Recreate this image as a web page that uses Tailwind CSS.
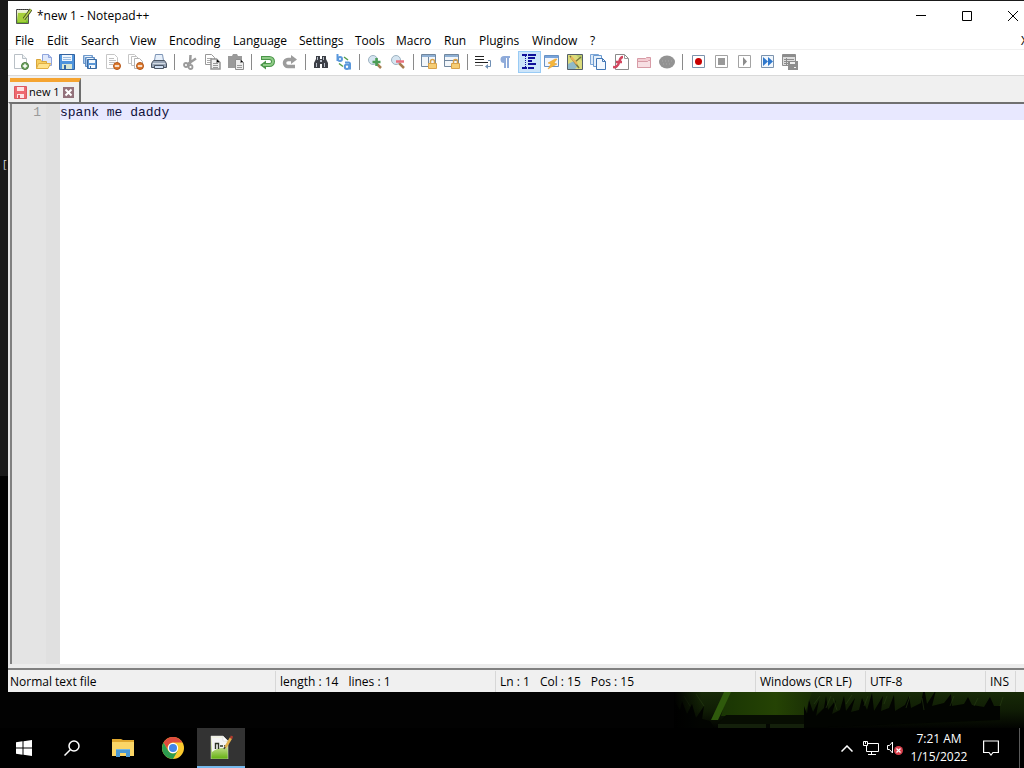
<!DOCTYPE html>
<html lang="en">
<head>
    <meta charset="UTF-8">
    <meta name="viewport" content="width=device-width, initial-scale=1.0">
    <title>*new 1 - Notepad++</title>
    <script src="https://cdn.jsdelivr.net/npm/@tailwindcss/browser@4"></script>
</head>
<body class="relative flex flex-col h-screen overflow-hidden bg-black text-black text-[12px] leading-4 font-['Open_Sans','Noto_Sans',sans-serif]">
    <!-- Wallpaper -->
    <div class="absolute inset-x-0 top-0 bottom-10 -z-0 bg-[linear-gradient(#1a1a1a_476px,#020202_476px)]">
        <span class="absolute left-[3px] top-[156px] text-[11px] text-gray-300">[</span>
        <svg class="absolute right-0 bottom-0 w-[350px] h-9" viewBox="0 0 350 36">
            <defs>
                <linearGradient id="grass" x1="0" x2="0" y1="0" y2="1"><stop offset="0" stop-color="#172a07"/><stop offset=".5" stop-color="#101d05"/><stop offset="1" stop-color="#020301"/></linearGradient>
                <linearGradient id="leaf" x1="0" x2="1" y1="0" y2="0"><stop offset="0" stop-color="#1a3504"/><stop offset=".6" stop-color="#254304"/><stop offset="1" stop-color="#1a2f05"/></linearGradient>
                <linearGradient id="fade" x1="0" x2="1"><stop offset="0" stop-color="#000"/><stop offset=".08" stop-color="#000" stop-opacity="0"/></linearGradient>
            </defs>
            <path fill="url(#grass)" d="M0 0h350v36H0z"/>
            <path fill="url(#leaf)" d="M54 0h84l-8 24H47z"/>
            <path fill="#070d02" d="M52 23h78l4 9H44z"/>
            <path fill="#14200b" d="M44 32h88v4H44z"/>
            <path fill="#040702" d="M92 32h4v4h-4z"/>
            <path fill="#2f5a0c" d="M50 0h7L44 28h-7z"/>
            <path fill="#020401" d="M0 36V8l6 10 2-9 5 13 5-10 4 14 8-12-2 13 8 2 4 7z"/>
            <path fill="#020401" d="M130 36V14l3 8 2-14 4 12 6-12-3 16 8-8 2-12 2 14 8-10-4 14 8-4 4-14 2 15 9-13-4 14 8-2 3-12 5 12 5-17 2 18 9-15-2 15 8-3 5-13 1 16 10-6 4-9 2 12 10-5 3-16 3 17 9-14-4 16 12-3 7-9 1 12 12-2 4-7 4 8 12 2 6-10 4 9h6v14z"/>
            <path stroke="#2b4416" stroke-opacity=".5" fill="none" d="M10 4l6 10M22 2l8 12M140 12l6-8M152 16l5-12M163 18l-4-12M172 12l6-9M190 14l4-10M210 12l3-8M232 16l4-12M250 18l-2-12M276 14l4-10M300 14l4-8M326 14l3-9"/>
            <path fill="url(#fade)" d="M0 0h350v36H0z"/>
        </svg>
    </div>

    <!-- Editor window, runs off the right edge of the screen -->
    <main class="relative flex flex-1 flex-col mt-px ml-2 -mr-3 mb-9 min-h-0 bg-white">
        <header class="flex items-center h-[30px] pl-2 shrink-0">
            <svg class="size-4 mr-[5px]" viewBox="0 0 16 16">
                <defs><linearGradient id="npp" x1="0" x2="0" y1="0" y2="1"><stop offset="0" stop-color="#f6f6ee"/><stop offset=".35" stop-color="#dbe9ac"/><stop offset="1" stop-color="#62b00e"/></linearGradient></defs>
                <path fill="url(#npp)" stroke="#555" d="M.5 1.500h12v14H.5z"/>
                <path stroke="#333" stroke-dasharray="1 1" d="M1 1.500h12"/>
                <path fill="#a5cf3a" d="M2 5h8v9H2z"/>
                <path stroke="#3b4a1e" stroke-width="3" d="M15 1.500L8 11"/>
                <path stroke="#b5cf4b" stroke-width="1.500" d="M15 1.500L8 11"/>
            </svg>
            <h1 class="flex-1">*new 1 - Notepad++</h1>
            <button aria-label="Minimize" class="w-[46px] h-full flex items-center justify-center"><svg class="size-[10px]" viewBox="0 0 10 10"><path stroke="#000" d="M0 4.500h10"/></svg></button>
            <button aria-label="Maximize" class="w-[46px] h-full flex items-center justify-center"><svg class="size-[10px]" viewBox="0 0 10 10"><path fill="none" stroke="#000" d="M.5.5h9v9h-9z"/></svg></button>
            <button aria-label="Close" class="w-[46px] h-full flex items-center justify-center"><svg class="size-[10px]" viewBox="0 0 10 10"><path stroke="#000" d="M0 0l10 10M10 0L0 10"/></svg></button>
        </header>

        <nav class="grid grid-cols-[32px_34px_49px_39px_64px_66px_56px_41px_48px_35px_53px_58px_1fr_15px] items-end h-[19px] pl-[7px] shrink-0 border-b border-[#f0f0f0] *:text-left">
            <button>File</button>
            <button>Edit</button>
            <button>Search</button>
            <button>View</button>
            <button>Encoding</button>
            <button>Language</button>
            <button>Settings</button>
            <button>Tools</button>
            <button>Macro</button>
            <button>Run</button>
            <button>Plugins</button>
            <button>Window</button>
            <button class="justify-self-start">?</button>
            <button>X</button>
        </nav>

        <!-- Toolbar -->
        <div role="toolbar" class="flex items-start h-[26px] pl-[2px] pt-px shrink-0 border-b border-[#d9d9d9] [&>button]:flex [&>button]:items-center [&>button]:pl-[3px] [&>button]:w-[23px] [&>button]:h-[22px] [&_svg]:size-4 [&>hr]:w-px [&>hr]:h-4 [&>hr]:mt-[3px] [&>hr]:ml-[3px] [&>hr]:mr-1 [&>hr]:border-0 [&>hr]:bg-[#8a8a8a]">
            <button aria-label="New"><svg viewBox="0 0 16 16"><path fill="#fff" stroke="#b9c0c6" d="M1.500.5h8l4 4v10h-12z"/><path fill="#eef1f3" stroke="#b9c0c6" d="M9.500.5v4h4"/><circle cx="12" cy="12" r="3.500" fill="#6fa55f" stroke="#4a7a3e"/><path stroke="#fff" stroke-width="1.400" d="M12 9.800v4.400M9.800 12h4.400"/></svg></button>
            <button aria-label="Open"><svg viewBox="0 0 16 16"><path fill="#dfe8fb" stroke="#8fa5dc" d="M6.500.5h6l3 3v8h-9z"/><path fill="#b9c9f2" stroke="#8fa5dc" d="M12.500.5v3h3"/><path fill="#f6cf62" stroke="#d9a53a" d="M.5 14.500v-9h4l1 2h5v7z"/><path fill="#ffe28a" stroke="#e0ae43" d="M.5 14.500l2-5h12l-2.500 5z"/></svg></button>
            <button aria-label="Save"><svg viewBox="0 0 16 16"><path fill="#4f94dc" stroke="#32629f" d="M.5.5h15v15H.5z"/><path fill="#eef5fc" d="M3 1h10v6H3z"/><path stroke="#9bbce0" d="M4 3.500h8M4 5.500h8"/><path fill="#d8e6d2" d="M3 10h10v5H3z"/><path fill="#33669f" d="M5 11h2v4H5z"/></svg></button>
            <button aria-label="Save all"><svg viewBox="0 0 16 16"><path fill="#a9c9ec" stroke="#6f99cb" d="M1.500 1.500h9v8h-9z"/><path fill="#eaf3fb" d="M3 2h6v2H3z"/><path fill="#9cc1ea" stroke="#5d8bc2" d="M3.500 3.500h9v9h-9z"/><path fill="#eaf3fb" d="M5 4h6v2H5z"/><path fill="#5b97d6" stroke="#3b699f" d="M5.500 5.500h9v9h-9z"/><path fill="#f2f8fd" d="M7 6h6v3H7zM7 11h6v3H7z"/><path fill="#33669f" d="M8 12h1v2H8z"/></svg></button>
            <button aria-label="Close file"><svg viewBox="0 0 16 16"><path fill="#fff" stroke="#c6c6c6" d="M1.500.5h8l3 3v11h-11z"/><path stroke="#c0c0c0" d="M4 4.500h5M4 6.500h7M4 8.500h6M4 10.500h4"/><circle cx="12" cy="12" r="3.500" fill="#dd7a2c" stroke="#b35518"/><path stroke="#fff" stroke-width="1.500" d="M9.800 12h4.400"/></svg></button>
            <button aria-label="Close all"><svg viewBox="0 0 16 16"><path fill="#fff" stroke="#c6c6c6" d="M.5.5h6l2 2v7h-8z"/><path fill="#fff" stroke="#c0c0c0" d="M3.500 2.500h5l2 2v7h-7z"/><path fill="#fff" stroke="#b4b4b4" d="M6.500 4.500h5l3 3v7h-8z"/><circle cx="12" cy="12" r="3.500" fill="#dd7a2c" stroke="#b35518"/><path stroke="#fff" stroke-width="1.500" d="M9.800 12h4.400"/></svg></button>
            <button aria-label="Print"><svg viewBox="0 0 16 16"><path fill="#e6effa" stroke="#7d94b5" d="M4.500.5h7l1 6h-9z"/><path fill="#9aa7b8" stroke="#4b5563" d="M2.500 6.500h11l2 3v4H.5v-4z"/><path stroke="#d5dce5" d="M2 9.500h12"/><path fill="#cfdff3" stroke="#4b5563" d="M3.500 11.500h9v3h-9z"/></svg></button>
            <hr>
            <button aria-label="Cut"><svg viewBox="0 0 16 16" fill="none" stroke="#9b9b9b"><path stroke-width="2.500" d="M8.500 1L8 10M14 4.500L5 10.500"/><circle cx="4" cy="11" r="2" stroke-width="1.800"/><circle cx="8.500" cy="13" r="2" stroke-width="1.800"/></svg></button>
            <button aria-label="Copy"><svg viewBox="0 0 16 16"><path fill="#fff" stroke="#999" d="M.5.5h6l3 3v7h-9z"/><path stroke="#aaa" d="M2 4.500h5M2 6.500h5M2 8.500h5"/><path fill="#f1f1f1" stroke="#949494" stroke-width="1.500" d="M6 5h5.500l3.500 3.500v6.500H6z"/><path stroke="#999" d="M8 9.500h5M8 11.500h5M8 13.500h5M11.500 5v3.500H15"/></svg></button>
            <button aria-label="Paste"><svg viewBox="0 0 16 16"><path fill="#9a9a9a" d="M0 2h4l1-2h4l1 2h4v12H0z"/><path fill="#ededed" stroke="#8e8e8e" d="M7.500 5.500h5l3 3v7h-8z"/><path stroke="#9a9a9a" d="M12.500 5.500v3h3M9 11.500h5M9 13.500h5"/></svg></button>
            <hr>
            <button aria-label="Undo"><svg viewBox="0 0 16 16" fill="none"><path stroke="#4b964a" stroke-width="4" d="M2 4h8.500a3.500 3.500 0 010 7H6"/><path fill="#4b964a" d="M7 6.500v9L1 11z"/><path stroke="#8fcb87" stroke-width="2" d="M3 4h7.500a3.500 3.500 0 010 7H4"/></svg></button>
            <button aria-label="Redo"><svg viewBox="0 0 16 16" fill="none"><path stroke="#9c9c9c" stroke-width="3.500" d="M13 12.500H6a3.500 3.500 0 010-7h4"/><path fill="#9c9c9c" d="M9 1v9l6-4.500z"/></svg></button>
            <hr>
            <button aria-label="Find"><svg viewBox="0 0 16 16"><path fill="#3c3f46" d="M3 2h4v3h2V2h4v3l2 4v5H9v-4H7v4H1V9l2-4z"/><path fill="#b8bec9" d="M4 3h1v3H4zM10 3h1v3h-1zM3 9h1v4H3zM11 9h1v4h-1zM7 6h2v2H7z"/></svg></button>
            <button aria-label="Replace"><svg viewBox="0 0 16 16" fill="none" stroke="#5b98dc" stroke-width="2"><path d="M1.500 0v7"/><circle cx="4" cy="5" r="2"/><path d="M9 8.500h3.500q1.500 0 1.500 1.500v5.500"/><circle cx="11" cy="12.800" r="2.200"/><path stroke="#579d4a" stroke-width="1.500" d="M3 9.500l4 3M8 3l4 3"/></svg></button>
            <hr>
            <button aria-label="Zoom in"><svg viewBox="0 0 16 16"><path stroke="#a77c4f" stroke-width="2.500" d="M9 9l5 5"/><circle cx="6" cy="6" r="4.500" fill="#d6e5f1" stroke="#9db2c1"/><path stroke="#4b9d55" stroke-width="2.500" d="M9.500 4v8M5.500 8h8"/></svg></button>
            <button aria-label="Zoom out"><svg viewBox="0 0 16 16"><path stroke="#a77c4f" stroke-width="2.500" d="M9 9l5 5"/><circle cx="6" cy="6" r="4.500" fill="#d6e5f1" stroke="#9db2c1"/><path stroke="#e8717e" stroke-width="2.500" d="M6 7.500h8"/></svg></button>
            <hr>
            <button aria-label="Synchronize vertical scrolling"><svg viewBox="0 0 16 16"><path fill="#f2f6fa" stroke="#71879e" d="M.5.5h14v12H.5z"/><path fill="#8fb0d4" d="M1 1h13v2H1z"/><path stroke="#71879e" d="M7.500 3v9"/><path fill="none" stroke="#d9a24a" stroke-width="1.500" d="M9.500 9V7.500a2 2 0 014 0V9"/><path fill="#f6cd74" stroke="#d9a24a" d="M7.500 9.500h8v5h-8z"/></svg></button>
            <button aria-label="Synchronize horizontal scrolling"><svg viewBox="0 0 16 16"><path fill="#f2f6fa" stroke="#71879e" d="M.5.5h14v12H.5z"/><path fill="#8fb0d4" d="M1 1h13v2H1z"/><path stroke="#71879e" d="M1 6.500h13"/><path fill="none" stroke="#d9a24a" stroke-width="1.500" d="M9.500 9V7.500a2 2 0 014 0V9"/><path fill="#f6cd74" stroke="#d9a24a" d="M7.500 9.500h8v5h-8z"/></svg></button>
            <hr>
            <button aria-label="Word wrap"><svg viewBox="0 0 16 16" fill="none"><path stroke="#222" d="M0 2.500h9M0 5.500h9M0 8.500h13"/><path stroke="#888" d="M0 11.500h8"/><path stroke="#6f8fb4" d="M13 6.500h2.500v6H11"/><path fill="#6f8fb4" d="M13 10v5l-3-2.500z"/></svg></button>
            <button aria-label="Show all characters"><svg viewBox="0 0 16 16"><path fill="#8fabda" d="M12 2v2h-1v10H9V4H8v10H6V9a3.500 3.500 0 010-7z"/></svg></button>
            <button aria-label="Show indent guide" aria-pressed="true" class="outline -outline-offset-1 outline-[#99cbf5] bg-[#cce4f9]"><svg viewBox="0 0 16 16"><path stroke="#10109a" stroke-width="2" d="M1 1h5M7 1h8M7 4h7M7 7h4M7 10h8M1 14h5M7 14h6"/><path stroke="#10109a" stroke-dasharray="1 1" d="M4.500 2v11"/></svg></button>
            <button aria-label="User defined language"><svg viewBox="0 0 16 16"><path fill="#f3f6fb" stroke="#6791c4" d="M.5 1.500h14v11H.5z"/><path fill="#79a4da" d="M1 2h13v2H1z"/><path fill="#f5b73c" stroke="#e0992a" stroke-width=".5" d="M11 5L4 9l3 1-3 5 9-5-3-1 3-4z"/></svg></button>
            <button aria-label="Document map"><svg viewBox="0 0 16 16"><path fill="#dcdc7c" stroke="#55606b" d="M.5.5h15v15H.5z"/><path fill="#8fb9c9" d="M1 10l6-3 4 5-3 3H1z"/><path fill="#b9c96a" d="M9 1h6v6z"/><path stroke="#77773d" stroke-width="1.500" d="M3 2l9 12M8 8l6-5"/><path stroke="#e9b35a" stroke-width="2" d="M4 3l6 7"/></svg></button>
            <button aria-label="Document list"><svg viewBox="0 0 16 16"><path fill="#dbe9f8" stroke="#7ba5d6" d="M.5.5h8v10h-8z"/><path fill="#e6f0fa" stroke="#6c9bd0" d="M3.500 1.500h8v11h-8z"/><path fill="#f2f8fe" stroke="#4277b5" d="M6.500 4.500h6l3 3v8h-9z"/><path fill="none" stroke="#4277b5" d="M12.500 4.500v3h3"/></svg></button>
            <button aria-label="Function list"><svg viewBox="0 0 16 16"><path fill="#fff" stroke="#8b8b8b" d="M2.500.5h9l4 4v11h-13z"/><path fill="none" stroke="#9b9b9b" d="M11.500.5v4h4"/><path fill="none" stroke="#d2475f" stroke-width="2.500" d="M10 3Q7.500 3 6.500 7T4 12q-1 1.500-4 1M3 8h6"/></svg></button>
            <button aria-label="Folder as workspace"><svg viewBox="0 0 16 16"><path fill="#f3ccd2" stroke="#d79ba6" d="M1.500 13.500v-9h8l1-1h4v10z"/><path fill="#f7dfe3" stroke="#d79ba6" d="M1.500 13.500v-6h10l1-1h2v7z"/></svg></button>
            <button aria-label="Monitoring"><svg viewBox="0 0 16 16"><ellipse cx="8" cy="8" rx="8" ry="6.500" fill="#939393"/><path fill="none" stroke="#a8a8a8" stroke-dasharray="1 2" d="M3 7h10M4 10h8"/></svg></button>
            <hr>
            <button aria-label="Record macro"><svg viewBox="0 0 16 16"><path fill="#fff" stroke="#7c93ad" d="M2.500 1.500h12v12h-12z"/><circle cx="8.500" cy="7.500" r="3.500" fill="#c80000"/></svg></button>
            <button aria-label="Stop recording"><svg viewBox="0 0 16 16"><path fill="#fff" stroke="#a3a3a3" d="M2.500 1.500h12v12h-12z"/><path fill="#999" d="M5 4h7v7H5z"/></svg></button>
            <button aria-label="Playback"><svg viewBox="0 0 16 16"><path fill="#fff" stroke="#a3a3a3" d="M2.500 1.500h12v12h-12z"/><path fill="#8c8c8c" d="M7 3l4 4.500L7 12z"/></svg></button>
            <button aria-label="Run macro multiple times"><svg viewBox="0 0 16 16"><path fill="#f1f7fd" stroke="#7c93ad" d="M2.500 1.500h12v12h-12z"/><path fill="#2f78cc" d="M4 3l5 4.500L4 12zM9 3l5 4.500L9 12z"/></svg></button>
            <button aria-label="Save macro"><svg viewBox="0 0 16 16"><path fill="#ddd" stroke="#8d8d8d" d="M.5.5h13v11H.5z"/><path fill="#8d8d8d" d="M1 1h12v2H1z"/><path stroke="#8d8d8d" d="M2 5.500h10M2 7.500h10M2 9.500h6M4.500 4v7"/><path fill="#8d8d8d" d="M6 7h10v9H6z"/><path fill="#eee" d="M8 8h5v2H8zM12 13h2v1h-2z"/></svg></button>
        </div>

        <!-- Tabs -->
        <div class="flex h-[26px] pl-[2px] pt-[2px] shrink-0 bg-[#f0f0f0]">
            <div class="flex items-center w-[71px] pl-1 border-t-4 border-t-[#f5a431] border-r-2 border-r-[#6e6e6e]">
                <svg class="size-[13px] mr-[2px]" viewBox="0 0 13 13"><path fill="#ee6a70" stroke="#dc5a61" d="M.5.5h12v12H.5z"/><path fill="#fde4e5" d="M3 1h7v4H3zM3 8h7v4H3z"/><path fill="#dc5a61" d="M4 9h2v3H4z"/></svg>
                <button class="flex-1 text-left text-[11px] whitespace-nowrap">new 1</button>
                <button aria-label="Close tab" class="mr-[5px]"><svg class="size-[11px]" viewBox="0 0 11 11"><path fill="#93717b" d="M0 0h11v11H0z"/><path stroke="#fff" stroke-width="2" d="M2.500 2.500l6 6M8.500 2.500l-6 6"/></svg></button>
            </div>
        </div>

        <!-- Text area -->
        <div class="flex flex-1 min-h-0 border-t-2 border-l-2 border-t-[#707070] border-l-[#e6e6e6] border-b-4 border-b-[#ececec] text-[13px] leading-[17px] font-['Liberation_Mono',monospace]">
            <div class="w-9 pr-[5px] border-l-2 border-[#808080] text-right text-[#9a9a9a] bg-[#e4e4e4]">1</div>
            <div class="w-[14px] bg-[#e0e0e0]"></div>
            <textarea aria-label="new 1" spellcheck="false" class="flex-1 resize-none outline-none text-[#10103a] bg-[linear-gradient(#e8e8ff_16px,#fff_16px)]">spank me daddy</textarea>
        </div>

        <!-- Status bar -->
        <footer class="flex items-center h-6 shrink-0 pl-[2px] pt-px bg-[#f0f0f0] border-t-2 border-[#808080] whitespace-pre *:h-full *:flex *:items-center">
            <div class="flex-1 border-r border-[#d7d7d7]">Normal text file</div>
            <div class="w-[220px] pl-1 gap-[10px] border-r border-[#d7d7d7]"><span>length : 14</span><span>lines : 1</span></div>
            <div class="w-[260px] pl-1 gap-[10px] border-r border-[#d7d7d7]"><span>Ln : 1</span><span>Col : 15</span><span>Pos : 15</span></div>
            <div class="w-[110px] pl-1 border-r border-[#d7d7d7]">Windows (CR LF)</div>
            <div class="w-[120px] pl-1 border-r border-[#d7d7d7]">UTF-8</div>
            <div class="w-[30px] pl-1 mr-5 border-r border-[#d7d7d7]">INS</div>
        </footer>
    </main>

    <!-- Taskbar -->
    <div class="relative flex items-center h-10 shrink-0 bg-black text-white *:h-full *:flex *:items-center *:justify-center">
        <button aria-label="Start" class="w-12"><svg class="size-4" viewBox="0 0 16 16" fill="#fff"><path d="M0 2.200l6.500-.9v6.200H0zM7.500 1.200L16 0v7.500H7.500zM0 8.500h6.500v6.200L0 13.800zM7.500 8.500H16V16l-8.500-1.200z"/></svg></button>
        <button aria-label="Search" class="w-12"><svg class="size-4" viewBox="0 0 16 16" fill="none" stroke="#fff" stroke-width="1.500"><circle cx="10" cy="6" r="5"/><path d="M6.500 9.500L.5 15.500"/></svg></button>
        <button aria-label="File Explorer" class="w-[53px]"><svg class="w-[22px] h-[18px]" viewBox="0 0 22 18"><path fill="#e0a82e" d="M0 0h9l2 1h11v4H0z"/><path fill="#fbd667" d="M0 3h22v14H0z"/><path fill="#4a98d3" d="M4 18v-8h14v8h-4v-4H8v4z"/><path fill="#74b7e4" d="M4 10h14v1H4z"/></svg></button>
        <button aria-label="Chrome" class="w-12"><svg class="size-[22px]" viewBox="0 0 22 22"><circle cx="11" cy="11" r="11" fill="#fbc92e"/><path fill="#de4b3e" d="M1.500 5.500A11 11 0 0120.500 5.500H11A5.500 5.500 0 006.200 13.700z"/><path fill="#2c9c4f" d="M1.500 5.500A11 11 0 0011 22l4.800-8.300a5.500 5.500 0 01-9.600 0z"/><circle cx="11" cy="11" r="5.200" fill="#fff"/><circle cx="11" cy="11" r="4" fill="#4285e8"/></svg></button>
        <button aria-label="Notepad++" class="w-12 bg-[#333] border-b-2 border-[#76b9ed]"><svg class="size-6" viewBox="0 0 24 24">
            <path fill="url(#npp)" stroke="#ddd" stroke-width=".5" d="M2 1h12l5 5v18H2z"/>
            <path fill="#f4f4f4" d="M3 3h11l4 4v6q-8-1-15 4z"/>
            <path fill="#fff" stroke="#ccc" stroke-width=".5" d="M14 1l5 5h-5z"/>
            <path fill="none" stroke="#2c3424" stroke-width="1.400" d="M6.500 14V8.500h3V14M11 11h3M15 11h2"/>
            <path stroke="#e3b04d" stroke-width="2.500" d="M22 3l-6 10"/><path stroke="#b03a2e" stroke-width="2.500" d="M23 1l-1 2.500"/><path stroke="#444" stroke-width="1.500" d="M16 12l-1 2"/>
        </svg></button>
        <span class="flex-1"></span>
        <button aria-label="Show hidden icons" class="w-6"><svg class="w-3 h-[7px]" viewBox="0 0 12 7"><path fill="none" stroke="#fff" stroke-width="1.500" d="M.5 6.500L6 1l5.500 5.500"/></svg></button>
        <button aria-label="Network" class="w-6"><svg class="w-4 h-[14px]" viewBox="0 0 16 14" fill="none" stroke="#fff"><path d="M5 2.500h10.500v8H3.500V5M8.500 11v2M5 13.500h8M.5.5h4v4h-4zM2.500 1v2"/></svg></button>
        <button aria-label="Volume muted" class="w-6"><svg class="w-4 h-[14px]" viewBox="0 0 16 14"><path fill="none" stroke="#fff" d="M.5 4.500h2l3-3.500v11l-3-3.500h-2z"/><circle cx="11.500" cy="9.500" r="4.500" fill="#d8404c"/><path stroke="#fff" stroke-width="1.200" d="M9.500 7.500l4 4M13.500 7.500l-4 4"/></svg></button>
        <button class="w-[64px] flex-col leading-[18px]"><span>7:21 AM</span><span>1/15/2022</span></button>
        <button aria-label="Notifications" class="w-10"><svg class="w-4 h-4" viewBox="0 0 16 16"><path fill="none" stroke="#fff" stroke-width="1.200" d="M.6 1h14.800v11.500H10L8 15l-2-2.500H.6z"/></svg></button>
        <button aria-label="Show desktop" class="w-[5px] ml-2 border-l border-[#5a5a5a]"></button>
    </div>
</body>
</html>
